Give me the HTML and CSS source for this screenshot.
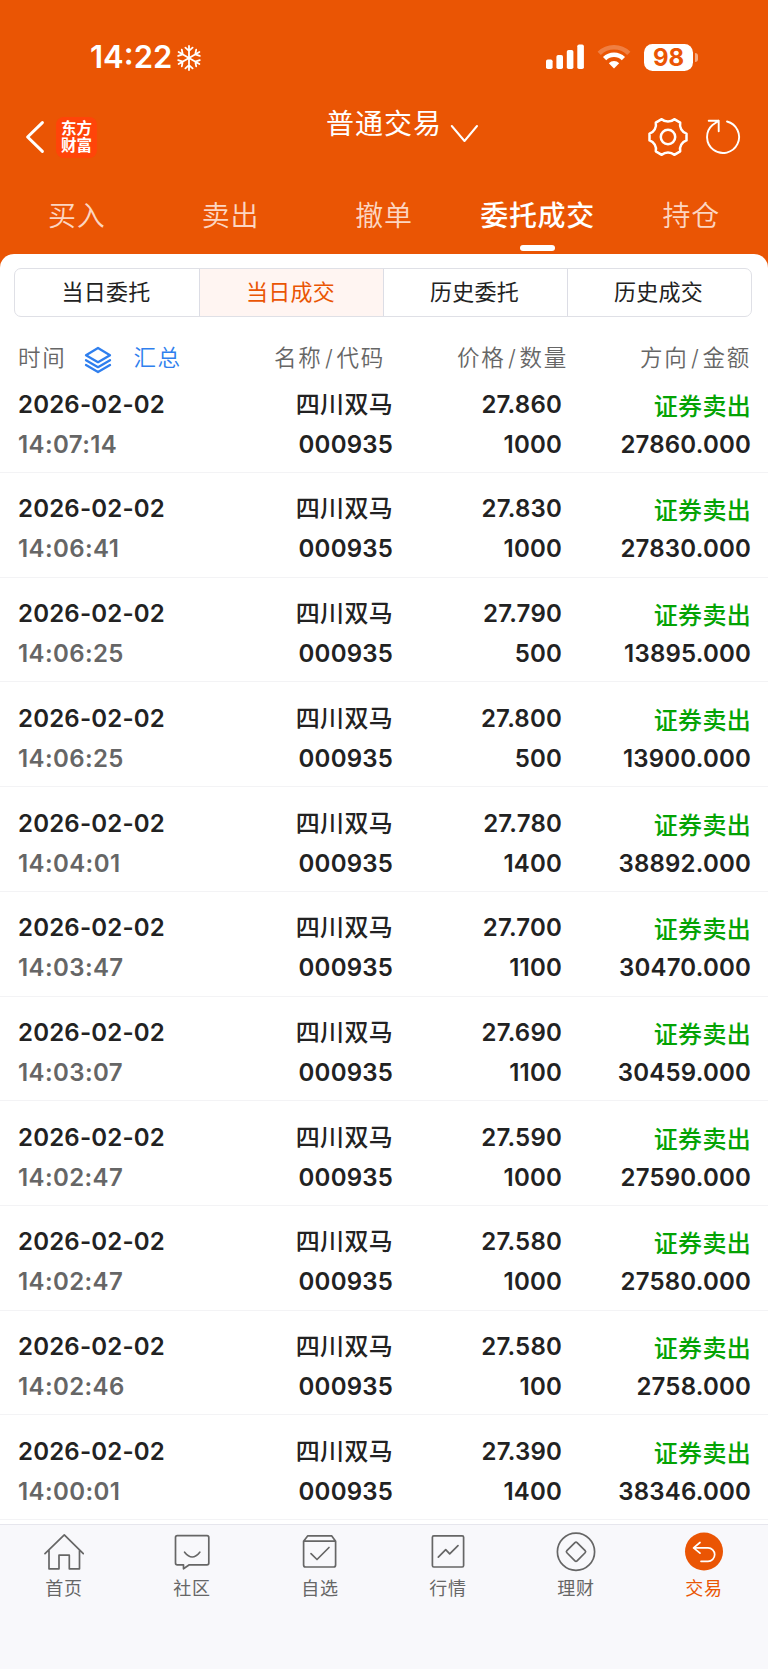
FILE: index.html
```html
<!DOCTYPE html>
<html lang="zh-CN">
<head>
<meta charset="utf-8">
<title>当日成交</title>
<link rel="stylesheet" href="styles.css">
</head>
<body>
<header class="top">
  <div class="status">
    <span class="clock">14:22</span>
    <svg class="snow" width="26" height="26" viewBox="-13 -13 26 26">
      <g id="arm"><path d="M0 0V-12M-3.6 -10.4L0 -7.2L3.6 -10.4"/></g>
      <use href="#arm" transform="rotate(60)"/><use href="#arm" transform="rotate(120)"/><use href="#arm" transform="rotate(180)"/><use href="#arm" transform="rotate(240)"/><use href="#arm" transform="rotate(300)"/>
    </svg>
    <svg class="signal" width="38" height="26" viewBox="0 0 38 26"><rect x="0" y="15.5" width="6.6" height="9.5" rx="1.8"/><rect x="10.4" y="11" width="6.6" height="14" rx="1.8"/><rect x="20.8" y="6" width="6.6" height="19" rx="1.8"/><rect x="31.3" y="0.5" width="6.6" height="24.5" rx="1.8"/></svg>
    <svg class="wifi" width="34" height="26" viewBox="0 0 34 26">
      <path class="wifi-dim" d="M2.2 9.3A21 21 0 0 1 31.8 9.3"/>
      <path d="M7.6 14.7A13.3 13.3 0 0 1 26.4 14.7"/>
      <path class="wifi-dot" d="M11.8 19.2A7.4 7.4 0 0 1 22.2 19.2L17 24.6Z"/>
    </svg>
    <span class="battery">98</span><span class="nub"></span>
  </div>
  <div class="titlebar">
    <svg class="back" width="20" height="34" viewBox="0 0 20 34"><path d="M17.4 2.6L2.6 17L17.4 31.4"/></svg>
    <div class="logo"><span>东方</span><span>财富</span></div>
    <div class="title">普通交易</div>
    <svg class="down" width="28" height="20" viewBox="0 0 28 20"><path d="M1.8 2L14.5 17L27 2"/></svg>
    <svg class="gear" width="42" height="42" viewBox="-21 -21 42 42"><path d="M18.5 3.4A9.4 9.4 0 0 0 12.2 14.3L6.3 17.8A9.4 9.4 0 0 0 -6.3 17.8L-12.2 14.3A9.4 9.4 0 0 0 -18.5 3.4V-3.4A9.4 9.4 0 0 0 -12.2 -14.3L-6.3 -17.8A9.4 9.4 0 0 0 6.3 -17.8L12.2 -14.3A9.4 9.4 0 0 0 18.5 -3.4Z"/><circle r="7.2"/></svg>
    <svg class="refresh" width="36" height="38" viewBox="-18 -19 36 38"><path d="M4 -15.5A16 16 0 1 1 -10.5 -12L-4.3 -16.2M-14.3 -16.2H-4.3V-5.8"/></svg>
  </div>
  <nav class="tabs">
    <span class="tab">买入</span><span class="tab">卖出</span><span class="tab">撤单</span><span class="tab tab-on">委托成交</span><span class="tab">持仓</span>
  </nav>
</header>
<main class="panel">
  <div class="segments">
    <span class="seg">当日委托</span><span class="seg seg-on">当日成交</span><span class="seg">历史委托</span><span class="seg">历史成交</span>
  </div>
  <div class="cols">
    <div class="col-time"><span>时间</span>
      <svg width="28" height="28" viewBox="0 0 28 28"><path d="M14 2L26 9.2L14 16.2L2 9.2ZM2 14.2L14 21.2L26 14.2M2 19L14 26L26 19"/></svg>
      <span class="sum">汇总</span></div>
    <span>名称<em>/</em>代码</span><span>价格<em>/</em>数量</span><span>方向<em>/</em>金额</span>
  </div>
  <div class="rows">
    <div class="row"><div class="when"><b>2026-02-02</b><i>14:07:14</i></div><div class="stock"><b>四川双马</b><i>000935</i></div><div class="num"><b>27.860</b><i>1000</i></div><div class="amount"><b>证券卖出</b><i>27860.000</i></div></div>
    <div class="row"><div class="when"><b>2026-02-02</b><i>14:06:41</i></div><div class="stock"><b>四川双马</b><i>000935</i></div><div class="num"><b>27.830</b><i>1000</i></div><div class="amount"><b>证券卖出</b><i>27830.000</i></div></div>
    <div class="row"><div class="when"><b>2026-02-02</b><i>14:06:25</i></div><div class="stock"><b>四川双马</b><i>000935</i></div><div class="num"><b>27.790</b><i>500</i></div><div class="amount"><b>证券卖出</b><i>13895.000</i></div></div>
    <div class="row"><div class="when"><b>2026-02-02</b><i>14:06:25</i></div><div class="stock"><b>四川双马</b><i>000935</i></div><div class="num"><b>27.800</b><i>500</i></div><div class="amount"><b>证券卖出</b><i>13900.000</i></div></div>
    <div class="row"><div class="when"><b>2026-02-02</b><i>14:04:01</i></div><div class="stock"><b>四川双马</b><i>000935</i></div><div class="num"><b>27.780</b><i>1400</i></div><div class="amount"><b>证券卖出</b><i>38892.000</i></div></div>
    <div class="row"><div class="when"><b>2026-02-02</b><i>14:03:47</i></div><div class="stock"><b>四川双马</b><i>000935</i></div><div class="num"><b>27.700</b><i>1100</i></div><div class="amount"><b>证券卖出</b><i>30470.000</i></div></div>
    <div class="row"><div class="when"><b>2026-02-02</b><i>14:03:07</i></div><div class="stock"><b>四川双马</b><i>000935</i></div><div class="num"><b>27.690</b><i>1100</i></div><div class="amount"><b>证券卖出</b><i>30459.000</i></div></div>
    <div class="row"><div class="when"><b>2026-02-02</b><i>14:02:47</i></div><div class="stock"><b>四川双马</b><i>000935</i></div><div class="num"><b>27.590</b><i>1000</i></div><div class="amount"><b>证券卖出</b><i>27590.000</i></div></div>
    <div class="row"><div class="when"><b>2026-02-02</b><i>14:02:47</i></div><div class="stock"><b>四川双马</b><i>000935</i></div><div class="num"><b>27.580</b><i>1000</i></div><div class="amount"><b>证券卖出</b><i>27580.000</i></div></div>
    <div class="row"><div class="when"><b>2026-02-02</b><i>14:02:46</i></div><div class="stock"><b>四川双马</b><i>000935</i></div><div class="num"><b>27.580</b><i>100</i></div><div class="amount"><b>证券卖出</b><i>2758.000</i></div></div>
    <div class="row"><div class="when"><b>2026-02-02</b><i>14:00:01</i></div><div class="stock"><b>四川双马</b><i>000935</i></div><div class="num"><b>27.390</b><i>1400</i></div><div class="amount"><b>证券卖出</b><i>38346.000</i></div></div>
  </div>
</main>
<nav class="dock">
  <div class="item"><svg width="40" height="40" viewBox="0 0 40 40"><path d="M1 21.7L20.3 2.8L39.3 21.7M5 18.2V36.8H15V23.2H25.3V36.8H35.5V18.2"/></svg><span>首页</span></div>
  <div class="item"><svg width="40" height="40" viewBox="0 0 40 40"><path d="M5.3 3.7H35Q36.8 3.7 36.8 5.5V31Q36.8 32.8 35 32.8H17.3L11.5 36.8V32.8H5.3Q3.5 32.8 3.5 31V5.5Q3.5 3.7 5.3 3.7ZM12.6 20.2Q20.2 29.8 27.8 20.2"/></svg><span>社区</span></div>
  <div class="item"><svg width="40" height="40" viewBox="0 0 40 40"><path d="M3.6 9.2L7.8 3.8H31.6L35.6 9.2V33Q35.6 35 33.6 35H5.6Q3.6 35 3.6 33ZM3.6 9.2H35.6M11 21.7L17 27.5L29 15.5"/></svg><span>自选</span></div>
  <div class="item"><svg width="40" height="40" viewBox="0 0 40 40"><rect x="4.4" y="3.8" width="31.2" height="31.2" rx="1.4"/><path d="M10.3 25.2L17.7 17.7L21.7 21.9L30 13.7"/></svg><span>行情</span></div>
  <div class="item"><svg width="40" height="40" viewBox="0 0 40 40"><circle cx="20" cy="19.7" r="18.6"/><rect x="12.8" y="12.5" width="14.4" height="14.4" rx="1.5" transform="rotate(45 20 19.7)"/></svg><span>理财</span></div>
  <div class="item item-on"><svg width="40" height="40" viewBox="0 0 40 40"><circle cx="20" cy="19.5" r="19"/><path d="M16 10.5L9.6 15.9L16 21.2M9.6 15.9H24A6.7 6.7 0 0 1 24 29.3H17"/></svg><span>交易</span></div>
</nav>
</body>
</html>
```
FILE: styles.css
```css
* { box-sizing: border-box; }
body { margin: 0; width: 768px; height: 1669px; overflow: hidden; background: #ea5504; font-family: Inter, "Noto Sans CJK SC", sans-serif; color: #222; display: flex; flex-direction: column; }
svg { display: block; flex: none; fill: none; stroke-linecap: round; stroke-linejoin: round; }
b, i, em { font-style: normal; font-weight: inherit; }
b, i { display: block; }

.top { height: 254px; flex: none; color: #fff; }
.top svg { stroke: #fff; }
.status { height: 114px; display: flex; align-items: center; padding-left: 90px; }
.clock { font-size: 31px; font-weight: 600; line-height: 36px; width: 83px; white-space: nowrap; }
.snow { margin: 1px 0 0 3px; stroke-width: 1.8; }
.top .signal { margin-left: 344px; fill: #fff; stroke: none; }
.wifi { margin-left: 13px; stroke-width: 4.6; }
.top .wifi path { stroke-linecap: butt; }
.top .wifi-dim { opacity: .25; }
.top .wifi .wifi-dot { fill: #fff; stroke: none; }
.battery { margin-left: 13px; width: 49px; height: 27px; border-radius: 8.5px; background: #fff; color: #ea5504; font-size: 24px; font-weight: 700; line-height: 27px; text-align: center; }
.nub { width: 3px; height: 9px; margin-left: 2px; border-radius: 0 3px 3px 0; background: #f5aa82; }
.titlebar { height: 46px; display: flex; align-items: center; padding-left: 25px; }
.back { stroke-width: 3; }
.logo { margin-left: 11px; width: 41px; height: 41px; border-radius: 8px; background: #ff4409; display: flex; flex-direction: column; align-items: center; justify-content: center; font-size: 15.5px; line-height: 17.5px; font-weight: 700; }
.title { margin: -26px 0 0 229px; font-size: 28px; line-height: 40px; letter-spacing: 1px; width: 117px; white-space: nowrap; }
.down { margin: -7px 0 0 7px; stroke-width: 2; }
.gear { margin-left: 169px; stroke-width: 2.5; }
.refresh { margin-left: 16px; stroke-width: 1.9; }
.tabs { height: 94px; display: grid; grid-template-columns: repeat(5, 1fr); }
.tab { padding-top: 36px; font-size: 28px; line-height: 40px; letter-spacing: .7px; text-align: center; color: #fcd6c2; font-weight: 350; }
.tab-on { color: #fff; font-weight: 500; display: flex; flex-direction: column; align-items: center; }
.tab-on::after { content: ""; width: 35px; height: 5.5px; margin-top: 9px; border-radius: 3px; background: #fff; }

.panel { height: 1270px; flex: none; background: #fff; border-radius: 14px 14px 0 0; padding-top: 14px; }
.segments { margin: 0 16px 0 14px; height: 49px; display: grid; grid-template-columns: repeat(4, 1fr); border: 1.5px solid #dfe0e6; border-radius: 7px; overflow: hidden; }
.seg { font-size: 22px; line-height: 46px; letter-spacing: .2px; text-align: center; border-left: 1.5px solid #dcdde5; padding-right: 2px; }
.seg:first-child { border-left: 0; }
.seg-on { background: #fff5f2; color: #ea5504; }
.cols { height: 51.3px; padding: 21px 0 0 18px; display: grid; grid-template-columns: 256px 183px 183px 128px; font-size: 22.5px; line-height: 40px; letter-spacing: 1.7px; color: #666; font-weight: 350; white-space: nowrap; }
.cols em { padding: 0 2px 0 2.5px; }
.col-time { display: flex; }
.col-time svg { margin: 8px 21px 0 18px; stroke: #2f7fee; stroke-width: 2.3; }
.sum { color: #2f7fee; }
.rows { font-size: 24px; font-weight: 600; line-height: 40px; }
.row { height: 104.72px; padding: 16.4px 0 0 18px; border-bottom: 1.5px solid #f3f3f5; display: grid; grid-template-columns: 182px 193px 169px 189px; }
.row i, .num b, .when b { letter-spacing: .2px; }
.row .when i { color: #666; letter-spacing: .4px; }
.stock, .num, .amount { text-align: right; }
.stock b { font-weight: 500; letter-spacing: .3px; }
.amount b { color: #04a304; font-weight: 500; letter-spacing: .3px; height: 40px; padding-top: 2px; }

.dock { flex: 1; background: #f8f8fb; border-top: 1.5px solid #e6e6ed; display: grid; grid-template-columns: repeat(6, 1fr); }
.item { display: flex; flex-direction: column; align-items: center; padding-top: 6.5px; font-size: 18px; line-height: 30px; letter-spacing: .8px; color: #666; }
.item svg { stroke: #666; stroke-width: 1.7; }
.item span { margin-top: 2px; }
.item-on { color: #ea5504; }
.item-on svg { stroke: #fff; }
.item-on circle { fill: #ea5504; stroke: none; }
```
